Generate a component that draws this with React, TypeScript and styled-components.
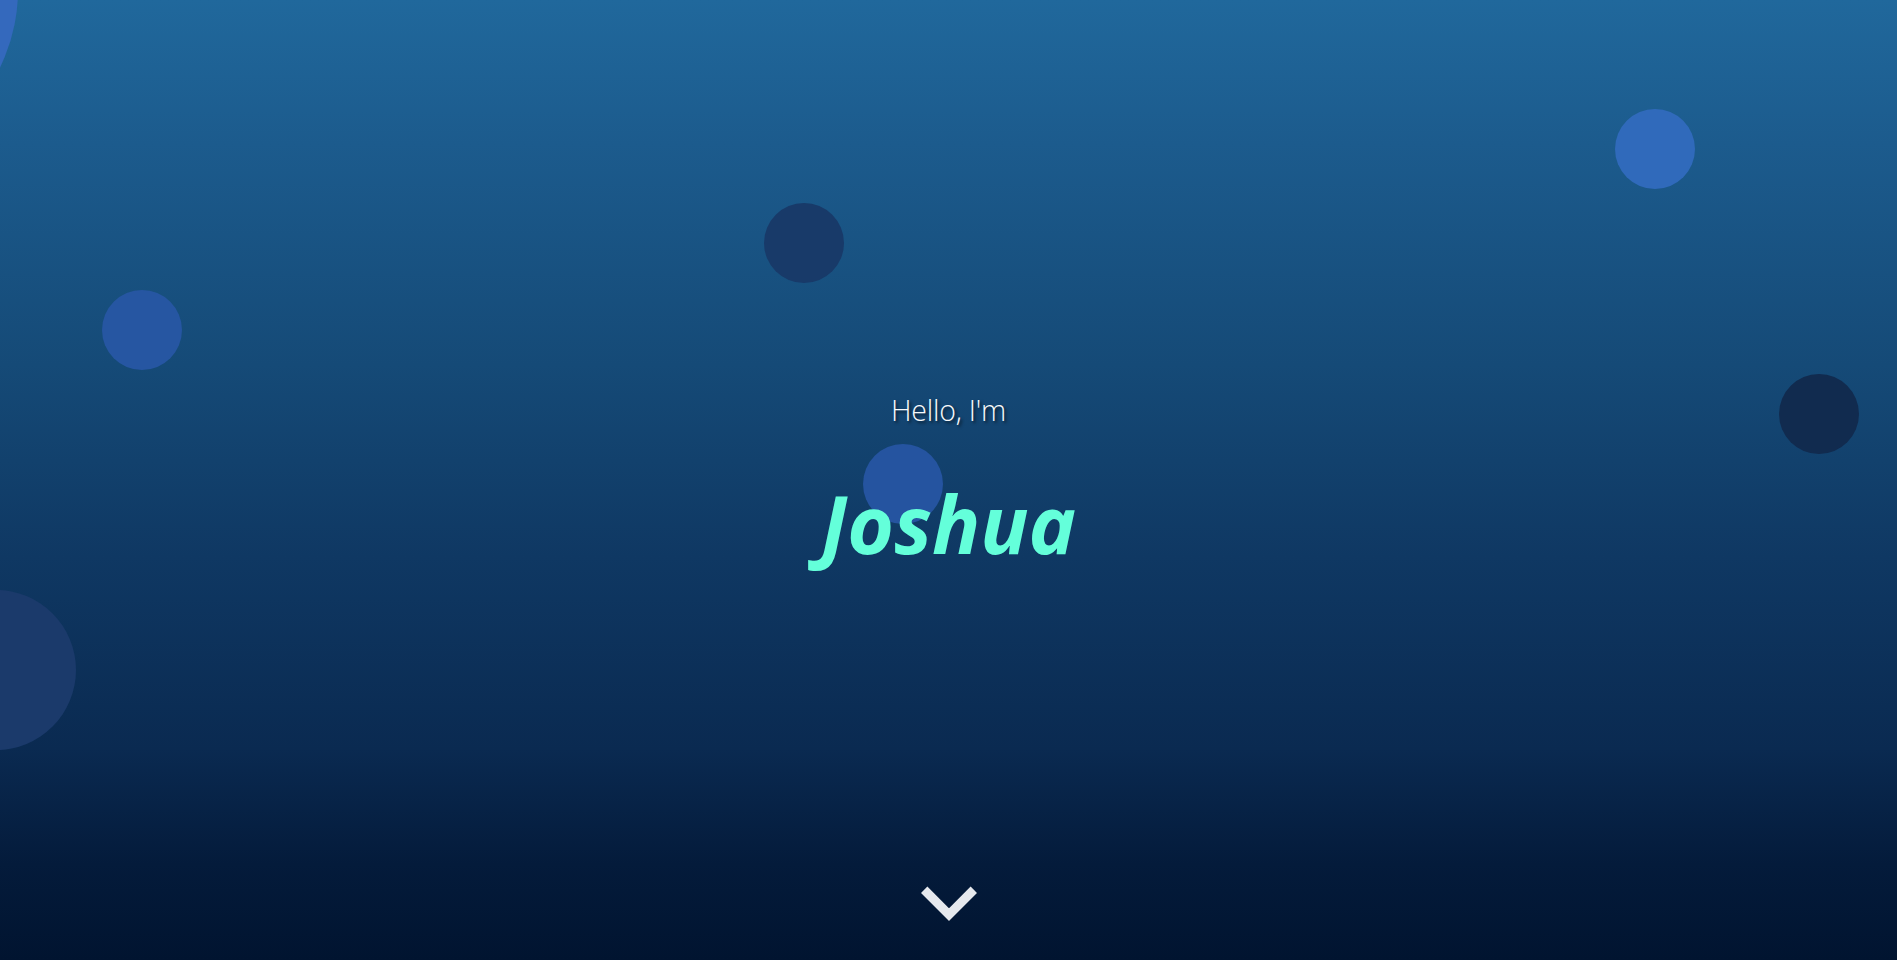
import React from "react";
import styled, { createGlobalStyle } from "styled-components";

const GlobalStyle = createGlobalStyle`
  * { box-sizing: border-box; }
  html, body { margin: 0; padding: 0; }
  body { font-family: "Open Sans", "Noto Sans", sans-serif; background: #011430; }
`;

const Hero = styled.section`
  position: relative;
  width: 100%;
  height: 100vh;
  overflow: hidden;
  display: flex;
  flex-direction: column;
  align-items: center;
  justify-content: center;
  background: linear-gradient(
    180deg,
    #20689c 0%,
    #1c5b8d 15%,
    #154a77 38%,
    #0f3863 58%,
    #0a2a51 78%,
    #041b3b 90%,
    #011430 100%
  );
`;

const Bubble = styled.span<{ $x: number; $y: number; $d: number; $c: string }>`
  position: absolute;
  left: ${(p) => p.$x}px;
  top: ${(p) => p.$y}px;
  width: ${(p) => p.$d}px;
  height: ${(p) => p.$d}px;
  border-radius: 50%;
  background: ${(p) => p.$c};
  z-index: 0;
`;

const Content = styled.div`
  position: relative;
  z-index: 1;
  display: flex;
  flex-direction: column;
  align-items: center;
  gap: 51px;
`;

const Greeting = styled.p`
  margin: 0;
  font-family: "Open Sans", "Noto Sans", sans-serif;
  font-weight: 300;
  font-size: 28.5px;
  line-height: 1.2;
  letter-spacing: -0.2px;
  color: #f7f9fb;
  text-shadow: 2px 2px 3px rgba(0, 0, 0, 0.6);
`;

const Name = styled.h1`
  margin: 0;
  font-family: "Open Sans", "Noto Sans", sans-serif;
  font-weight: 700;
  font-style: italic;
  font-size: 80px;
  line-height: 1.1;
  color: #64ffda;
`;

const ScrollCue = styled.a`
  position: absolute;
  left: 50%;
  bottom: 38px;
  transform: translateX(-50%);
  width: 56px;
  height: 36px;
  display: block;
  z-index: 1;
`;

const bubbles = [
  { x: -334, y: -186, d: 352, c: "#3469bd" },
  { x: 1615, y: 109, d: 80, c: "#306abb" },
  { x: 764, y: 203, d: 80, c: "#183a69" },
  { x: 102, y: 290, d: 80, c: "#2656a2" },
  { x: 1779, y: 374, d: 80, c: "#112b4f" },
  { x: 863, y: 444, d: 80, c: "#2554a0" },
  { x: -84, y: 590, d: 160, c: "#1b3a6b" },
];

export default function App() {
  return (
    <>
      <GlobalStyle />
      <Hero>
        {bubbles.map((b, i) => (
          <Bubble key={i} $x={b.x} $y={b.y} $d={b.d} $c={b.c} />
        ))}
        <Content>
          <Greeting>Hello, I'm</Greeting>
          <Name>Joshua</Name>
        </Content>
        <ScrollCue aria-label="Scroll down">
          <svg width="56" height="36" viewBox="0 0 56 36">
            <polyline
              points="3.2,3.8 28,28.6 52.8,3.8"
              fill="none"
              stroke="#e6e9ee"
              strokeWidth="9"
              strokeLinecap="butt"
              strokeLinejoin="miter"
            />
          </svg>
        </ScrollCue>
      </Hero>
    </>
  );
}
